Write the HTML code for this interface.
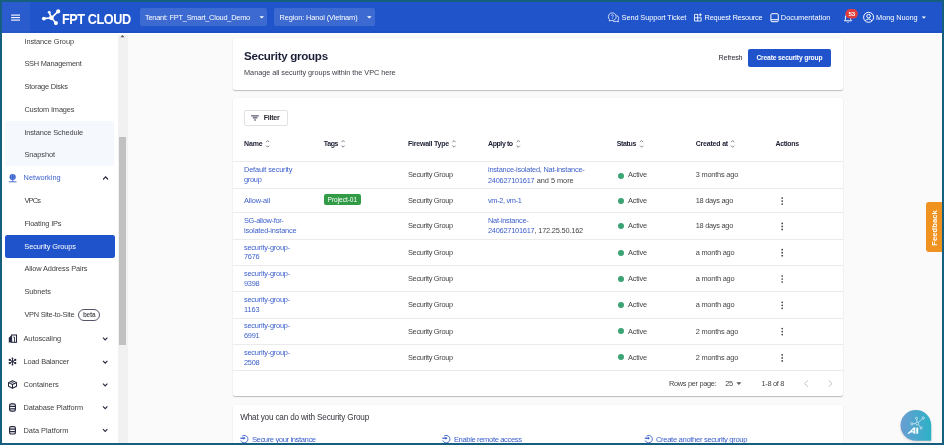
<!DOCTYPE html>
<html><head><meta charset="utf-8"><title>Security groups</title>
<style>
html,body{margin:0;padding:0;}
body{width:944px;height:445px;background:#165e80;overflow:hidden;position:relative;font-family:"Liberation Sans",sans-serif;}
#pg{position:absolute;left:2px;top:2px;width:940px;height:441px;overflow:hidden;background:#fafafa;}
#in{filter:blur(0.3px);position:absolute;left:-2px;top:-2px;width:944px;height:445px;}
#in div,#in span,#in svg{position:absolute;}
.t{white-space:nowrap;font-family:"Liberation Sans",sans-serif;}
.card{background:#fff;border-radius:2px;box-shadow:0 1px 1px rgba(0,0,0,.24),0 0 1.5px rgba(0,0,0,.07);left:232.7px;width:610.3px;}
.ln{left:232.5px;width:610.5px;height:1px;background:#ebebeb;}
.dot{width:6px;height:6px;border-radius:50%;background:#3ba374;left:618.1px;}
.hbox{background:rgba(255,255,255,.13);border-radius:2px;top:8.3px;height:18.1px;}
</style></head><body>
<div id="pg"><div id="in">
<!-- header -->
<div style="left:0;top:0;width:944px;height:33px;background:#1f54cb;"></div>
<div style="left:0;top:0;width:30px;height:33px;background:#2a5cce;"></div>
<div class="hbox" style="left:139.6px;width:127.4px;"></div>
<div class="hbox" style="left:273.5px;width:101.5px;"></div>
<!-- sidebar -->
<div style="left:0;top:33px;width:118.4px;height:412px;background:#fff;"></div>
<div style="left:118.4px;top:33px;width:9.5px;height:412px;background:#f1f1f1;"></div>
<div style="left:119.2px;top:136.6px;width:7px;height:208px;background:#c1c1c1;"></div>
<div style="left:4.8px;top:120.9px;width:109.7px;height:45.5px;background:#f5f8fd;border-radius:2px;"></div>
<div style="left:4.5px;top:235.3px;width:110.2px;height:22.4px;background:#1f53cb;border-radius:2.5px;"></div>
<div style="left:78.2px;top:308.9px;width:20px;height:10.6px;border:0.9px solid #55556a;border-radius:7px;"></div>
<div style="left:0;top:33px;width:944px;height:2.2px;background:#fff;"></div>
<div style="left:0;top:31.4px;width:944px;height:1.6px;background:rgba(0,0,60,.045);"></div>
<!-- cards -->
<div class="card" style="top:37.7px;height:52px;"></div>
<div class="card" style="top:98.1px;height:297.7px;"></div>
<div class="card" style="top:405px;height:60px;"></div>
<div style="left:748.1px;top:49px;width:82.9px;height:18.3px;background:#1f52cb;border-radius:2px;"></div>
<div style="left:244px;top:110.2px;width:41.5px;height:14.2px;border:1px solid #e2e2e2;border-radius:2px;"></div>
<div style="left:323.6px;top:194.3px;width:37.1px;height:10.3px;background:#319b46;border-radius:2px;"></div>
<!-- row lines -->
<div class="ln" style="top:161.2px;"></div>
<div class="ln" style="top:188.1px;"></div>
<div class="ln" style="top:212.4px;"></div>
<div class="ln" style="top:238.6px;"></div>
<div class="ln" style="top:265.2px;"></div>
<div class="ln" style="top:291.3px;"></div>
<div class="ln" style="top:317.6px;"></div>
<div class="ln" style="top:343.8px;"></div>
<div class="ln" style="top:370.2px;"></div>
<!-- status dots -->
<div class="dot" style="top:172.5px;"></div>
<div class="dot" style="top:198.0px;"></div>
<div class="dot" style="top:223.3px;"></div>
<div class="dot" style="top:249.6px;"></div>
<div class="dot" style="top:275.7px;"></div>
<div class="dot" style="top:301.9px;"></div>
<div class="dot" style="top:328.1px;"></div>
<div class="dot" style="top:354.4px;"></div>
<!-- feedback -->
<div style="left:925.9px;top:202.2px;width:18px;height:50.2px;background:#f0921f;border-radius:3px 0 0 3px;"></div>
<!-- ICONS -->
<svg id="icons" style="left:0;top:0;" width="944" height="445" viewBox="0 0 944 445">
<rect x="11.1" y="14.549999999999999" width="8.9" height="1.1" fill="#fff"/>
<rect x="11.1" y="17.05" width="8.9" height="1.1" fill="#fff"/>
<rect x="11.1" y="19.55" width="8.9" height="1.1" fill="#fff"/>
<line x1="51.4" y1="17.8" x2="43.9" y2="18.6" stroke="#fff" stroke-width="1.6"/>
<circle cx="43.9" cy="18.6" r="1.95" fill="#fff"/>
<line x1="51.4" y1="17.8" x2="49.2" y2="12.3" stroke="#fff" stroke-width="1.6"/>
<circle cx="49.2" cy="12.3" r="1.4" fill="#fff"/>
<line x1="51.4" y1="17.8" x2="58.2" y2="11.4" stroke="#fff" stroke-width="1.6"/>
<circle cx="58.2" cy="11.4" r="2.05" fill="#fff"/>
<line x1="51.4" y1="17.8" x2="55.9" y2="23.1" stroke="#fff" stroke-width="1.6"/>
<circle cx="55.9" cy="23.1" r="2.05" fill="#fff"/>
<circle cx="51.4" cy="17.8" r="2.4" fill="#fff"/>
<path d="M259.5 16.3L264 16.3L261.75 18.6Z" fill="#fff"/>
<path d="M367 16.3L371.6 16.3L369.3 18.6Z" fill="#fff"/>
<path d="M921.7 16.4L926 16.4L923.85 18.7Z" fill="#fff"/>
<g fill="none" stroke="#fff" stroke-width="0.75" stroke-linejoin="round"><path d="M609.6 19.6a3.9 3.9 0 1 1 1.6 0.9l-2 0.5z"/><path d="M616.4 15.2a3.4 3.4 0 0 1 1.7 5l0.6 1.6l-2-0.4a3.6 3.6 0 0 1-3.6-0.3"/></g>
<path d="M611.4 15.7a1.0 1.0 0 1 1 1.5 0.85q-0.5 0.3-0.5 0.85" fill="none" stroke="#fff" stroke-width="0.65"/><circle cx="612.4" cy="18.5" r="0.42" fill="#fff"/>
<g fill="none" stroke="#fff" stroke-width="0.85"><path d="M698 14.4H694.5V21H701.2V17.6"/><path d="M694.5 17.8H701.2M697.7 14.4V21"/><path d="M700.3 13.2V16.4M698.7 14.8H701.9"/></g>
<g fill="none" stroke="#fff" stroke-width="1"><rect x="770.9" y="13.7" width="7.4" height="8" rx="1.1"/><path d="M770.9 19.7H778.3"/></g>
<path d="M844.5 20.8h7v-0.5l-0.9-0.9v-2.3a2.6 2.6 0 0 0-5.2 0v2.3l-0.9 0.9z" fill="none" stroke="#fff" stroke-width="1"/><path d="M847.2 21.9a0.8 0.8 0 0 0 1.6 0z" fill="#fff"/>
<rect x="845.4" y="9" width="12.5" height="9.6" rx="4.8" fill="#e23d3d"/>
<g fill="none" stroke="#fff" stroke-width="1"><circle cx="868.6" cy="17.3" r="5"/><circle cx="868.6" cy="16.1" r="1.8"/><path d="M865.3 20.9a3.8 3.8 0 0 1 6.6 0"/></g>
<path d="M120.6 37.2L124.4 37.2L122.5 34.9Z" fill="#505050"/>
<circle cx="12.65" cy="177.1" r="3.1" fill="#3a5fcd"/><ellipse cx="12.65" cy="177.1" rx="1.3" ry="3.1" fill="none" stroke="#9fb3ea" stroke-width="0.5"/><path d="M12.65 180.2V181.7M8.8 181.8H16.5" stroke="#3a5fcd" stroke-width="0.9" fill="none"/>
<path d="M103.1 179.5L105.6 176.9L108.1 179.5" fill="none" stroke="#25273f" stroke-width="1.1"/>
<path d="M103 337.6L105.2 339.90000000000003L107.4 337.6" fill="none" stroke="#25273f" stroke-width="1.1"/>
<path d="M103 360.8L105.2 363.1L107.4 360.8" fill="none" stroke="#25273f" stroke-width="1.1"/>
<path d="M103 383.6L105.2 385.90000000000003L107.4 383.6" fill="none" stroke="#25273f" stroke-width="1.1"/>
<path d="M103 406.40000000000003L105.2 408.70000000000005L107.4 406.40000000000003" fill="none" stroke="#25273f" stroke-width="1.1"/>
<path d="M103 429.2L105.2 431.5L107.4 429.2" fill="none" stroke="#25273f" stroke-width="1.1"/>
<path d="M8.8 342.40000000000003V337.70000000000005L11.6 334.90000000000003V342.40000000000003Z" fill="#25273f"/><rect x="11.6" y="335.0" width="4.9" height="7.3" fill="none" stroke="#25273f" stroke-width="1.05"/><path d="M13.3 337.1H14.5V342.0" fill="none" stroke="#25273f" stroke-width="0.9"/>
<g stroke="#25273f" stroke-width="0.9" fill="none"><path d="M12.5 357.9V365.1M9.6 359.8L15.4 363.2M9.6 363.2L15.4 359.8"/></g>
<circle cx="9.75" cy="359.9" r="1.15" fill="#25273f"/>
<circle cx="15.25" cy="363.1" r="1.15" fill="#25273f"/>
<circle cx="9.75" cy="363.1" r="1.15" fill="#25273f"/>
<circle cx="15.25" cy="359.9" r="1.15" fill="#25273f"/>
<circle cx="12.5" cy="358.5" r="0.9" fill="#25273f"/>
<circle cx="12.5" cy="364.5" r="0.9" fill="#25273f"/>
<circle cx="12.5" cy="361.5" r="1.1" fill="#25273f"/>
<g stroke="#25273f" stroke-width="1.05" fill="none" stroke-linejoin="round"><path d="M8.5 382.59999999999997L12.5 380.7L16.5 382.59999999999997V386.29999999999995L12.5 388.2L8.5 386.29999999999995Z"/><path d="M8.5 382.59999999999997L12.5 384.5L16.5 382.59999999999997M12.5 384.5V388.2"/><path d="M10.5 381.65L14.5 383.54999999999995" stroke-width="0.7"/></g>
<g stroke="#25273f" stroke-width="1.15" fill="none"><rect x="9.6" y="403.8" width="5.8" height="7.4" rx="1.6"/><path d="M9.6 406.3H15.4M9.6 408.8H15.4"/></g>
<g stroke="#25273f" stroke-width="1.15" fill="none"><rect x="9.6" y="426.6" width="5.8" height="7.4" rx="1.6"/><path d="M9.6 429.1H15.4M9.6 431.6H15.4"/></g>
<path d="M251.2 115.9H258.8M252.8 117.9H257.4M254.2 120H255.9" stroke="#2d2d45" stroke-width="1" fill="none"/>
<path d="M266.0 142.1L267.6 140.5L269.20000000000005 142.1M266.0 145.6L267.6 147.2L269.20000000000005 145.6" stroke="#74747e" stroke-width="0.9" fill="none"/>
<path d="M341.5 142.1L343.1 140.5L344.70000000000005 142.1M341.5 145.6L343.1 147.2L344.70000000000005 145.6" stroke="#74747e" stroke-width="0.9" fill="none"/>
<path d="M452.4 142.1L454 140.5L455.6 142.1M452.4 145.6L454 147.2L455.6 145.6" stroke="#74747e" stroke-width="0.9" fill="none"/>
<path d="M516.6999999999999 142.1L518.3 140.5L519.9 142.1M516.6999999999999 145.6L518.3 147.2L519.9 145.6" stroke="#74747e" stroke-width="0.9" fill="none"/>
<path d="M640.0 142.1L641.6 140.5L643.2 142.1M640.0 145.6L641.6 147.2L643.2 145.6" stroke="#74747e" stroke-width="0.9" fill="none"/>
<path d="M731.1 142.1L732.7 140.5L734.3000000000001 142.1M731.1 145.6L732.7 147.2L734.3000000000001 145.6" stroke="#74747e" stroke-width="0.9" fill="none"/>
<circle cx="782.2" cy="198.1" r="0.85" fill="#3a3a42"/>
<circle cx="782.2" cy="201.1" r="0.85" fill="#3a3a42"/>
<circle cx="782.2" cy="204.1" r="0.85" fill="#3a3a42"/>
<circle cx="782.2" cy="223.4" r="0.85" fill="#3a3a42"/>
<circle cx="782.2" cy="226.4" r="0.85" fill="#3a3a42"/>
<circle cx="782.2" cy="229.4" r="0.85" fill="#3a3a42"/>
<circle cx="782.2" cy="249.7" r="0.85" fill="#3a3a42"/>
<circle cx="782.2" cy="252.7" r="0.85" fill="#3a3a42"/>
<circle cx="782.2" cy="255.7" r="0.85" fill="#3a3a42"/>
<circle cx="782.2" cy="276.0" r="0.85" fill="#3a3a42"/>
<circle cx="782.2" cy="279.0" r="0.85" fill="#3a3a42"/>
<circle cx="782.2" cy="282.0" r="0.85" fill="#3a3a42"/>
<circle cx="782.2" cy="302.3" r="0.85" fill="#3a3a42"/>
<circle cx="782.2" cy="305.3" r="0.85" fill="#3a3a42"/>
<circle cx="782.2" cy="308.3" r="0.85" fill="#3a3a42"/>
<circle cx="782.2" cy="328.6" r="0.85" fill="#3a3a42"/>
<circle cx="782.2" cy="331.6" r="0.85" fill="#3a3a42"/>
<circle cx="782.2" cy="334.6" r="0.85" fill="#3a3a42"/>
<circle cx="782.2" cy="354.9" r="0.85" fill="#3a3a42"/>
<circle cx="782.2" cy="357.9" r="0.85" fill="#3a3a42"/>
<circle cx="782.2" cy="360.9" r="0.85" fill="#3a3a42"/>
<path d="M736.3 382.3L741.4 382.3L738.8499999999999 384.9Z" fill="#5a5a5a"/>
<path d="M807.8 380.4L804.5 383.6L807.8 386.8" stroke="#c4c4c4" stroke-width="1" fill="none"/>
<path d="M828.7 380.4L832 383.6L828.7 386.8" stroke="#c4c4c4" stroke-width="1" fill="none"/>
<path d="M242.10000000000002 436.1A3.7 3.7 0 1 1 240.8 440.5" fill="none" stroke="#3a5fcd" stroke-width="0.9"/><path d="M240.4 438.2H244.5" stroke="#3a5fcd" stroke-width="1.3" fill="none"/><path d="M243.5 436.7L245.5 438.2L243.5 439.7Z" fill="#3a5fcd"/>
<path d="M444.1 436.1A3.7 3.7 0 1 1 442.8 440.5" fill="none" stroke="#3a5fcd" stroke-width="0.9"/><path d="M442.40000000000003 438.2H446.5" stroke="#3a5fcd" stroke-width="1.3" fill="none"/><path d="M445.5 436.7L447.5 438.2L445.5 439.7Z" fill="#3a5fcd"/>
<path d="M646.5 436.1A3.7 3.7 0 1 1 645.2 440.5" fill="none" stroke="#3a5fcd" stroke-width="0.9"/><path d="M644.8000000000001 438.2H648.9000000000001" stroke="#3a5fcd" stroke-width="1.3" fill="none"/><path d="M647.9000000000001 436.7L649.9000000000001 438.2L647.9000000000001 439.7Z" fill="#3a5fcd"/>
<defs><linearGradient id="ag" x1="0" y1="0" x2="1" y2="0"><stop offset="0" stop-color="#6b9dd3"/><stop offset="1" stop-color="#2bb1c6"/></linearGradient><filter id="sh" x="-20%" y="-20%" width="140%" height="150%"><feGaussianBlur stdDeviation="1.2"/></filter></defs>
<path d="M915.9 411.2a15.3 15.3 0 0 1 15.3 15.3V441.8H915.9a15.3 15.3 0 0 1 0-30.6z" fill="rgba(120,80,80,.25)" filter="url(#sh)"/>
<path d="M915.9 410a15.3 15.3 0 0 1 15.3 15.3V440.7H915.9a15.3 15.3 0 0 1 0-30.7z" fill="url(#ag)"/>
<g stroke="#fff" stroke-width="0.55" fill="none" opacity="0.95"><path d="M917.2 423.5L916.5 418.3M917.2 423.5L923.2 418M917.2 423.5L911.8 423.8M917.2 423.5L921.1 428"/></g>
<circle cx="917.2" cy="423.5" r="1.5" fill="#4fa8cc" stroke="#fff" stroke-width="0.55"/>
<circle cx="916.5" cy="418.3" r="1.0" fill="#4fa8cc" stroke="#fff" stroke-width="0.55"/>
<circle cx="923.2" cy="418" r="1.2" fill="#4fa8cc" stroke="#fff" stroke-width="0.55"/>
<circle cx="911.8" cy="423.8" r="1.1" fill="#4fa8cc" stroke="#fff" stroke-width="0.55"/>
<circle cx="921.1" cy="428" r="1.1" fill="#4fa8cc" stroke="#fff" stroke-width="0.55"/>
<path d="M907.3 433.7L913.6 427.6H915.3V433.7H913.6V432.4H910.5L909.3 433.7ZM911.6 431.3H913.6V429.2Z" fill="#fff"/>
<path d="M916.3 427.6H918.2V433.7H916.3Z" fill="#fff"/>
</svg>
<span class="t" style="left:61.7px;top:10.7px;font-size:14.5px;line-height:16px;color:#fff;font-weight:700;letter-spacing:-0.5px;transform:scaleX(0.8742);transform-origin:0 50%;">FPT CLOUD</span>
<span class="t" style="left:145.0px;top:12.9px;font-size:7.4px;line-height:10px;color:#fff;letter-spacing:-0.226px;">Tenant: FPT_Smart_Cloud_Demo</span>
<span class="t" style="left:279.5px;top:12.9px;font-size:7.4px;line-height:10px;color:#fff;letter-spacing:-0.122px;">Region: Hanoi (Vietnam)</span>
<span class="t" style="left:621.6px;top:12.9px;font-size:7.4px;line-height:10px;color:#fff;letter-spacing:-0.109px;">Send Support Ticket</span>
<span class="t" style="left:704.5px;top:12.9px;font-size:7.4px;line-height:10px;color:#fff;letter-spacing:-0.201px;">Request Resource</span>
<span class="t" style="left:780.8px;top:12.9px;font-size:7.4px;line-height:10px;color:#fff;letter-spacing:-0.009px;">Documentation</span>
<span class="t" style="left:876.1px;top:12.9px;font-size:7.4px;line-height:10px;color:#fff;letter-spacing:-0.093px;">Mong Nuong</span>
<span class="t" style="left:848.5px;top:10.0px;font-size:6.1px;line-height:8px;color:#fff;font-weight:700;letter-spacing:-0.091px;">53</span>
<span class="t" style="left:935.0px;top:227.7px;font-size:7.6px;line-height:10px;color:#fff;font-weight:700;letter-spacing:0.044px;transform:translate(-50%,-50%) rotate(-90deg);">Feedback</span>
<span class="t" style="left:24.4px;top:36.6px;font-size:7.4px;line-height:10px;color:#424246;letter-spacing:-0.068px;">Instance Group</span>
<span class="t" style="left:24.4px;top:59.4px;font-size:7.4px;line-height:10px;color:#424246;letter-spacing:-0.235px;">SSH Management</span>
<span class="t" style="left:24.4px;top:82.0px;font-size:7.4px;line-height:10px;color:#424246;letter-spacing:-0.194px;">Storage Disks</span>
<span class="t" style="left:24.4px;top:104.8px;font-size:7.4px;line-height:10px;color:#424246;letter-spacing:-0.136px;">Custom Images</span>
<span class="t" style="left:24.4px;top:127.8px;font-size:7.4px;line-height:10px;color:#424246;letter-spacing:-0.136px;">Instance Schedule</span>
<span class="t" style="left:24.4px;top:150.4px;font-size:7.4px;line-height:10px;color:#424246;letter-spacing:-0.092px;">Snapshot</span>
<span class="t" style="left:24.4px;top:195.7px;font-size:7.4px;line-height:10px;color:#424246;letter-spacing:-0.802px;">VPCs</span>
<span class="t" style="left:24.4px;top:218.7px;font-size:7.4px;line-height:10px;color:#424246;letter-spacing:-0.178px;">Floating IPs</span>
<span class="t" style="left:24.4px;top:264.2px;font-size:7.4px;line-height:10px;color:#424246;letter-spacing:-0.122px;">Allow Address Pairs</span>
<span class="t" style="left:24.4px;top:287.4px;font-size:7.4px;line-height:10px;color:#424246;letter-spacing:-0.089px;">Subnets</span>
<span class="t" style="left:24.4px;top:310.0px;font-size:7.4px;line-height:10px;color:#424246;letter-spacing:-0.245px;">VPN Site-to-Site</span>
<span class="t" style="left:23.6px;top:172.8px;font-size:7.4px;line-height:10px;color:#3d60cc;letter-spacing:0.013px;">Networking</span>
<span class="t" style="left:24.3px;top:241.8px;font-size:7.4px;line-height:10px;color:#fff;letter-spacing:-0.087px;">Security Groups</span>
<span class="t" style="left:82.9px;top:311.2px;font-size:6.4px;line-height:8px;color:#5a5a5e;font-weight:700;letter-spacing:-0.185px;">beta</span>
<span class="t" style="left:23.5px;top:333.8px;font-size:7.4px;line-height:10px;color:#424246;letter-spacing:-0.065px;">Autoscaling</span>
<span class="t" style="left:23.5px;top:356.9px;font-size:7.4px;line-height:10px;color:#424246;letter-spacing:-0.167px;">Load Balancer</span>
<span class="t" style="left:23.5px;top:379.9px;font-size:7.4px;line-height:10px;color:#424246;letter-spacing:-0.055px;">Containers</span>
<span class="t" style="left:23.5px;top:402.7px;font-size:7.4px;line-height:10px;color:#424246;letter-spacing:-0.101px;">Database Platform</span>
<span class="t" style="left:23.5px;top:425.5px;font-size:7.4px;line-height:10px;color:#424246;letter-spacing:-0.022px;">Data Platform</span>
<span class="t" style="left:244.1px;top:49.0px;font-size:11.6px;line-height:14px;color:#1c1f38;font-weight:700;letter-spacing:-0.304px;">Security groups</span>
<span class="t" style="left:244.1px;top:67.8px;font-size:7.3px;line-height:10px;color:#40404a;letter-spacing:-0.049px;">Manage all security groups within the VPC here</span>
<span class="t" style="left:718.6px;top:53.0px;font-size:7.2px;line-height:10px;color:#2a2a33;letter-spacing:-0.196px;">Refresh</span>
<span class="t" style="left:756.4px;top:53.1px;font-size:6.7px;line-height:10px;color:#fff;font-weight:700;letter-spacing:-0.149px;">Create security group</span>
<span class="t" style="left:263.8px;top:112.8px;font-size:7px;line-height:10px;color:#2a2a33;font-weight:700;letter-spacing:-0.238px;">Filter</span>
<span class="t" style="left:244.0px;top:138.6px;font-size:7px;line-height:10px;color:#1d2033;font-weight:700;letter-spacing:-0.145px;">Name</span>
<span class="t" style="left:323.8px;top:138.6px;font-size:7px;line-height:10px;color:#1d2033;font-weight:700;letter-spacing:-0.407px;">Tags</span>
<span class="t" style="left:408.0px;top:138.6px;font-size:7px;line-height:10px;color:#1d2033;font-weight:700;letter-spacing:-0.226px;">Firewall Type</span>
<span class="t" style="left:488.0px;top:138.6px;font-size:7px;line-height:10px;color:#1d2033;font-weight:700;letter-spacing:-0.413px;">Apply to</span>
<span class="t" style="left:616.7px;top:138.6px;font-size:7px;line-height:10px;color:#1d2033;font-weight:700;letter-spacing:-0.351px;">Status</span>
<span class="t" style="left:695.7px;top:138.6px;font-size:7px;line-height:10px;color:#1d2033;font-weight:700;letter-spacing:-0.193px;">Created at</span>
<span class="t" style="left:775.5px;top:138.6px;font-size:7px;line-height:10px;color:#1d2033;font-weight:700;letter-spacing:-0.339px;">Actions</span>
<span class="t" style="left:244.0px;top:165.0px;font-size:7.4px;line-height:10px;color:#3d60cc;letter-spacing:-0.165px;">Default security</span>
<span class="t" style="left:244.0px;top:175.0px;font-size:7.4px;line-height:10px;color:#3d60cc;letter-spacing:-0.281px;">group</span>
<span class="t" style="left:408.0px;top:170.2px;font-size:7.4px;line-height:10px;color:#454548;letter-spacing:-0.321px;">Security Group</span>
<span class="t" style="left:627.9px;top:170.2px;font-size:7.4px;line-height:10px;color:#454548;letter-spacing:-0.173px;">Active</span>
<span class="t" style="left:695.7px;top:170.2px;font-size:7.4px;line-height:10px;color:#454548;letter-spacing:-0.200px;">3 months ago</span>
<span class="t" style="left:244.0px;top:196.2px;font-size:7.4px;line-height:10px;color:#3d60cc;letter-spacing:-0.170px;">Allow-all</span>
<span class="t" style="left:408.0px;top:196.2px;font-size:7.4px;line-height:10px;color:#454548;letter-spacing:-0.321px;">Security Group</span>
<span class="t" style="left:627.9px;top:196.2px;font-size:7.4px;line-height:10px;color:#454548;letter-spacing:-0.173px;">Active</span>
<span class="t" style="left:695.7px;top:196.2px;font-size:7.4px;line-height:10px;color:#454548;letter-spacing:-0.271px;">18 days ago</span>
<span class="t" style="left:244.0px;top:216.0px;font-size:7.4px;line-height:10px;color:#3d60cc;letter-spacing:-0.310px;">SG-allow-for-</span>
<span class="t" style="left:244.0px;top:226.0px;font-size:7.4px;line-height:10px;color:#3d60cc;letter-spacing:-0.175px;">isolated-instance</span>
<span class="t" style="left:408.0px;top:221.2px;font-size:7.4px;line-height:10px;color:#454548;letter-spacing:-0.321px;">Security Group</span>
<span class="t" style="left:627.9px;top:221.2px;font-size:7.4px;line-height:10px;color:#454548;letter-spacing:-0.173px;">Active</span>
<span class="t" style="left:695.7px;top:221.2px;font-size:7.4px;line-height:10px;color:#454548;letter-spacing:-0.271px;">18 days ago</span>
<span class="t" style="left:244.0px;top:243.0px;font-size:7.4px;line-height:10px;color:#3d60cc;letter-spacing:-0.220px;">security-group-</span>
<span class="t" style="left:244.0px;top:252.0px;font-size:7.4px;line-height:10px;color:#3d60cc;letter-spacing:-0.238px;">7676</span>
<span class="t" style="left:408.0px;top:247.8px;font-size:7.4px;line-height:10px;color:#454548;letter-spacing:-0.321px;">Security Group</span>
<span class="t" style="left:627.9px;top:247.8px;font-size:7.4px;line-height:10px;color:#454548;letter-spacing:-0.173px;">Active</span>
<span class="t" style="left:695.7px;top:247.8px;font-size:7.4px;line-height:10px;color:#454548;letter-spacing:-0.218px;">a month ago</span>
<span class="t" style="left:244.0px;top:269.0px;font-size:7.4px;line-height:10px;color:#3d60cc;letter-spacing:-0.220px;">security-group-</span>
<span class="t" style="left:244.0px;top:279.0px;font-size:7.4px;line-height:10px;color:#3d60cc;letter-spacing:-0.238px;">9398</span>
<span class="t" style="left:408.0px;top:274.1px;font-size:7.4px;line-height:10px;color:#454548;letter-spacing:-0.321px;">Security Group</span>
<span class="t" style="left:627.9px;top:274.1px;font-size:7.4px;line-height:10px;color:#454548;letter-spacing:-0.173px;">Active</span>
<span class="t" style="left:695.7px;top:274.1px;font-size:7.4px;line-height:10px;color:#454548;letter-spacing:-0.218px;">a month ago</span>
<span class="t" style="left:244.0px;top:295.0px;font-size:7.4px;line-height:10px;color:#3d60cc;letter-spacing:-0.220px;">security-group-</span>
<span class="t" style="left:244.0px;top:305.0px;font-size:7.4px;line-height:10px;color:#3d60cc;letter-spacing:-0.102px;">1163</span>
<span class="t" style="left:408.0px;top:300.4px;font-size:7.4px;line-height:10px;color:#454548;letter-spacing:-0.321px;">Security Group</span>
<span class="t" style="left:627.9px;top:300.4px;font-size:7.4px;line-height:10px;color:#454548;letter-spacing:-0.173px;">Active</span>
<span class="t" style="left:695.7px;top:300.4px;font-size:7.4px;line-height:10px;color:#454548;letter-spacing:-0.218px;">a month ago</span>
<span class="t" style="left:244.0px;top:321.0px;font-size:7.4px;line-height:10px;color:#3d60cc;letter-spacing:-0.220px;">security-group-</span>
<span class="t" style="left:244.0px;top:331.0px;font-size:7.4px;line-height:10px;color:#3d60cc;letter-spacing:-0.238px;">6991</span>
<span class="t" style="left:408.0px;top:326.8px;font-size:7.4px;line-height:10px;color:#454548;letter-spacing:-0.321px;">Security Group</span>
<span class="t" style="left:627.9px;top:326.8px;font-size:7.4px;line-height:10px;color:#454548;letter-spacing:-0.173px;">Active</span>
<span class="t" style="left:695.7px;top:326.8px;font-size:7.4px;line-height:10px;color:#454548;letter-spacing:-0.200px;">2 months ago</span>
<span class="t" style="left:244.0px;top:348.0px;font-size:7.4px;line-height:10px;color:#3d60cc;letter-spacing:-0.220px;">security-group-</span>
<span class="t" style="left:244.0px;top:358.0px;font-size:7.4px;line-height:10px;color:#3d60cc;letter-spacing:-0.238px;">2508</span>
<span class="t" style="left:408.0px;top:353.1px;font-size:7.4px;line-height:10px;color:#454548;letter-spacing:-0.321px;">Security Group</span>
<span class="t" style="left:627.9px;top:353.1px;font-size:7.4px;line-height:10px;color:#454548;letter-spacing:-0.173px;">Active</span>
<span class="t" style="left:695.7px;top:353.1px;font-size:7.4px;line-height:10px;color:#454548;letter-spacing:-0.200px;">2 months ago</span>
<span class="t" style="left:488.0px;top:165.3px;font-size:7.4px;line-height:10px;color:#3d60cc;letter-spacing:-0.217px;">instance-isolated, Nat-instance-</span>
<span class="t" style="left:488.0px;top:175.7px;font-size:7.4px;line-height:10px;color:#3d60cc;letter-spacing:-0.236px;">240627101617</span>
<span class="t" style="left:536.7px;top:175.7px;font-size:7.4px;line-height:10px;color:#454548;letter-spacing:-0.039px;">and 5 more</span>
<span class="t" style="left:488.0px;top:196.0px;font-size:7.4px;line-height:10px;color:#3d60cc;letter-spacing:-0.347px;">vm-2, vm-1</span>
<span class="t" style="left:488.0px;top:216.1px;font-size:7.4px;line-height:10px;color:#3d60cc;letter-spacing:-0.266px;">Nat-instance-</span>
<span class="t" style="left:488.0px;top:226.0px;font-size:7.4px;line-height:10px;color:#3d60cc;letter-spacing:-0.236px;">240627101617</span>
<span class="t" style="left:534.5px;top:226.0px;font-size:7.4px;line-height:10px;color:#454548;letter-spacing:-0.192px;">, 172.25.50.162</span>
<span class="t" style="left:327.6px;top:194.9px;font-size:6.6px;line-height:9px;color:#fff;letter-spacing:-0.056px;">Project-01</span>
<span class="t" style="left:668.9px;top:378.5px;font-size:7.4px;line-height:10px;color:#454548;letter-spacing:-0.305px;">Rows per page:</span>
<span class="t" style="left:725.3px;top:378.5px;font-size:7.4px;line-height:10px;color:#454548;letter-spacing:-0.517px;">25</span>
<span class="t" style="left:761.5px;top:378.5px;font-size:7.4px;line-height:10px;color:#454548;letter-spacing:-0.308px;">1-8 of 8</span>
<span class="t" style="left:240.2px;top:411.7px;font-size:8.2px;line-height:11px;color:#33333b;letter-spacing:-0.179px;">What you can do with Security Group</span>
<span class="t" style="left:251.9px;top:434.6px;font-size:7.7px;line-height:10px;color:#3d60cc;letter-spacing:-0.421px;">Secure your instance</span>
<span class="t" style="left:453.9px;top:434.6px;font-size:7.7px;line-height:10px;color:#3d60cc;letter-spacing:-0.413px;">Enable remote access</span>
<span class="t" style="left:655.9px;top:434.6px;font-size:7.7px;line-height:10px;color:#3d60cc;letter-spacing:-0.359px;">Create another security group</span>
</div></div>
</body></html>
